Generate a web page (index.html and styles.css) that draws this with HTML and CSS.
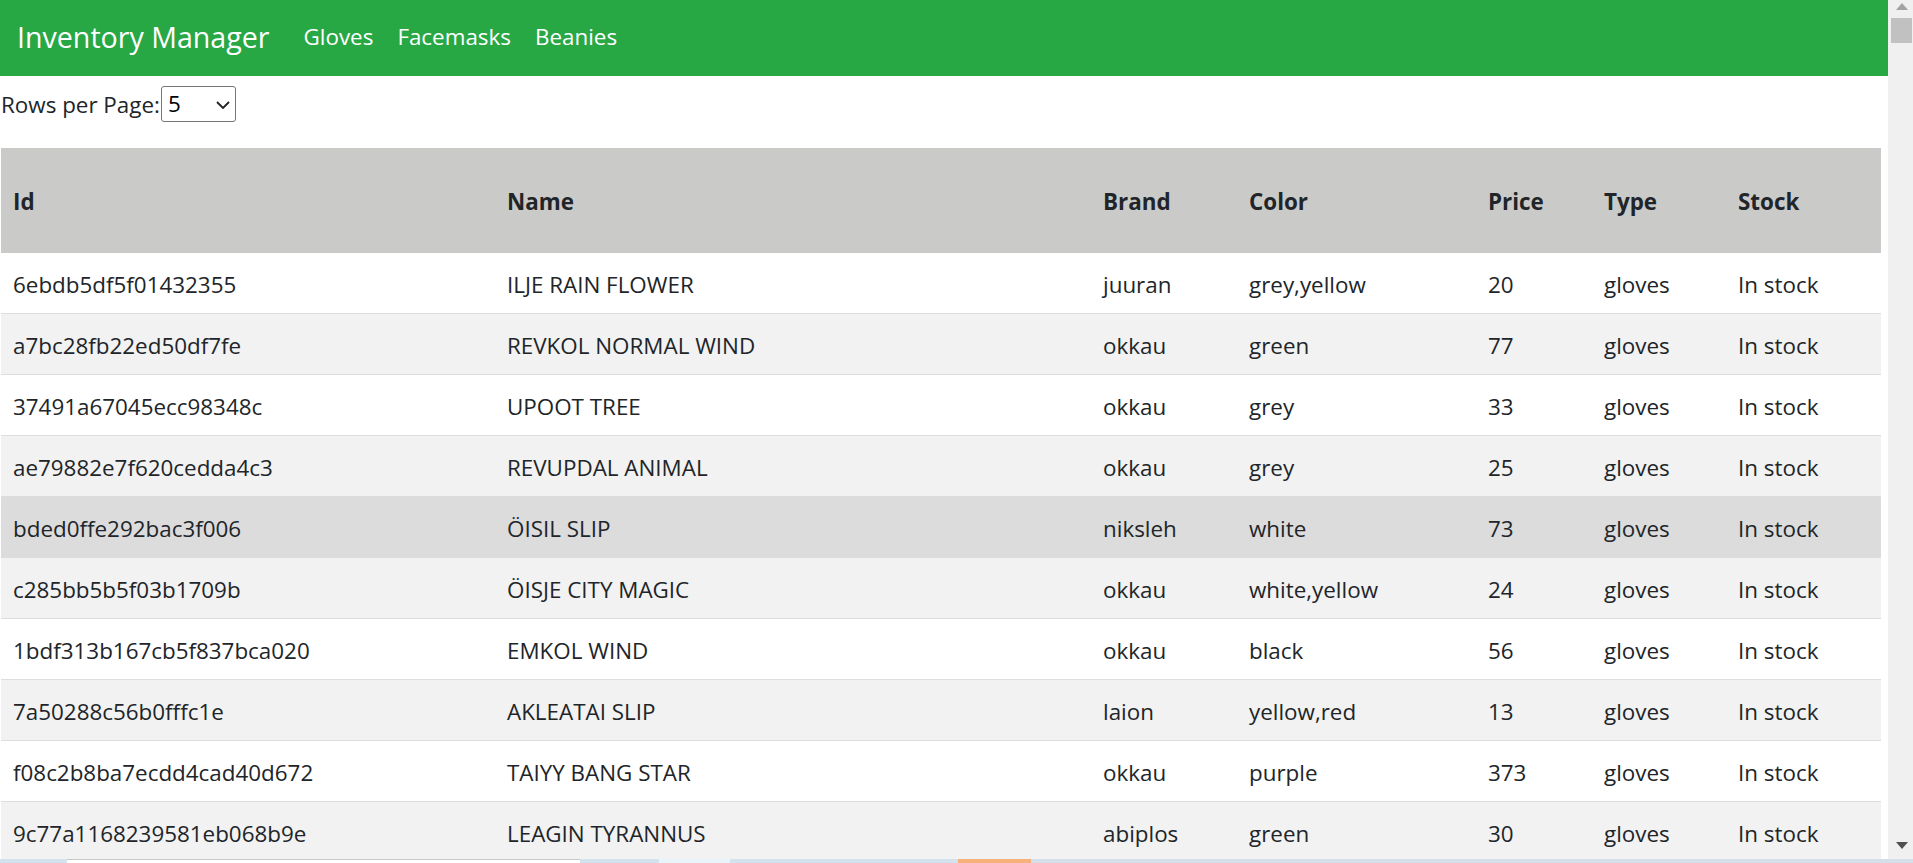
FILE: index.html
```html
<!DOCTYPE html>
<html lang="en">
<head>
<meta charset="utf-8">
<title>Inventory Manager</title>
<link rel="stylesheet" href="styles.css">
</head>
<body>
<div class="window">
  <div class="page">
    <nav class="navbar">
      <span class="brand">Inventory Manager</span>
      <a class="nav-link" href="#">Gloves</a>
      <a class="nav-link" href="#">Facemasks</a>
      <a class="nav-link" href="#">Beanies</a>
    </nav>
    <div class="controls">
      <label class="rows-label" for="rpp">Rows per Page:</label>
      <span class="select-wrap">
        <select id="rpp" class="select">
          <option>5</option>
          <option>10</option>
          <option>20</option>
        </select>
        <svg class="chevron" width="14" height="8" viewBox="0 0 14 8"><path d="M1 1l6 6 6-6" fill="none" stroke="#222" stroke-width="1.8"/></svg>
      </span>
    </div>
    <table class="inventory">
      <colgroup>
        <col class="c-id"><col class="c-name"><col class="c-brand"><col class="c-color"><col class="c-price"><col class="c-type"><col class="c-stock">
      </colgroup>
      <thead>
        <tr><th>Id</th><th>Name</th><th>Brand</th><th>Color</th><th>Price</th><th>Type</th><th>Stock</th></tr>
      </thead>
      <tbody>
        <tr><td>6ebdb5df5f01432355</td><td>ILJE RAIN FLOWER</td><td>juuran</td><td>grey,yellow</td><td>20</td><td>gloves</td><td>In stock</td></tr>
        <tr><td>a7bc28fb22ed50df7fe</td><td>REVKOL NORMAL WIND</td><td>okkau</td><td>green</td><td>77</td><td>gloves</td><td>In stock</td></tr>
        <tr><td>37491a67045ecc98348c</td><td>UPOOT TREE</td><td>okkau</td><td>grey</td><td>33</td><td>gloves</td><td>In stock</td></tr>
        <tr><td>ae79882e7f620cedda4c3</td><td>REVUPDAL ANIMAL</td><td>okkau</td><td>grey</td><td>25</td><td>gloves</td><td>In stock</td></tr>
        <tr class="hover"><td>bded0ffe292bac3f006</td><td>ÖISIL SLIP</td><td>niksleh</td><td>white</td><td>73</td><td>gloves</td><td>In stock</td></tr>
        <tr><td>c285bb5b5f03b1709b</td><td>ÖISJE CITY MAGIC</td><td>okkau</td><td>white,yellow</td><td>24</td><td>gloves</td><td>In stock</td></tr>
        <tr><td>1bdf313b167cb5f837bca020</td><td>EMKOL WIND</td><td>okkau</td><td>black</td><td>56</td><td>gloves</td><td>In stock</td></tr>
        <tr><td>7a50288c56b0fffc1e</td><td>AKLEATAI SLIP</td><td>laion</td><td>yellow,red</td><td>13</td><td>gloves</td><td>In stock</td></tr>
        <tr><td>f08c2b8ba7ecdd4cad40d672</td><td>TAIYY BANG STAR</td><td>okkau</td><td>purple</td><td>373</td><td>gloves</td><td>In stock</td></tr>
        <tr><td>9c77a1168239581eb068b9e</td><td>LEAGIN TYRANNUS</td><td>abiplos</td><td>green</td><td>30</td><td>gloves</td><td>In stock</td></tr>
      </tbody>
    </table>
  </div>
  <div class="scrollbar">
    <svg class="sb-arrow" width="12" height="7" viewBox="0 0 12 7"><path d="M6 0L12 7H0z" fill="#a3a3a3"/></svg>
    <div class="sb-thumb"></div>
    <div class="sb-track"></div>
    <svg class="sb-arrow down" width="12" height="7" viewBox="0 0 12 7"><path d="M0 0H12L6 7z" fill="#505050"/></svg>
  </div>
</div>
<div class="taskbar">
  <span class="tb-seg tb-a"></span>
  <span class="tb-seg tb-box"></span>
  <span class="tb-seg tb-b"></span>
  <span class="tb-seg tb-light"></span>
  <span class="tb-seg tb-c"></span>
  <span class="tb-seg tb-orange"></span>
  <span class="tb-seg tb-rest"></span>
</div>
</body>
</html>
```

FILE: styles.css
```css
* { box-sizing: border-box; }

html, body {
  margin: 0;
  padding: 0;
  height: 100%;
  overflow: hidden;
}

body {
  font-family: "Open Sans", "Noto Sans", sans-serif;
  font-size: 22.4px;
  color: #212529;
  background: #fff;
}

.window {
  display: flex;
  height: 863px;
}

.page {
  width: 1888px;
  flex: none;
  display: flex;
  flex-direction: column;
}

.navbar {
  height: 76px;
  background: #28a745;
  display: flex;
  align-items: center;
  padding: 0 0 3px 17px;
}

.brand {
  color: #fff;
  font-size: 28.6px;
  margin-right: 34px;
}

.nav-link {
  color: #fff;
  text-decoration: none;
  font-size: 22.4px;
  margin-right: 24px;
}

.controls {
  display: flex;
  align-items: center;
  padding: 10px 0 0 1px;
  height: 45px;
  margin-bottom: 27px;
}

.rows-label {
  font-size: 22.4px;
  padding-top: 2px;
  margin-right: 1px;
}

.select-wrap {
  position: relative;
  display: inline-block;
  width: 75px;
  height: 36px;
}

.select {
  appearance: none;
  -webkit-appearance: none;
  width: 75px;
  height: 36px;
  border: 1px solid #767676;
  border-radius: 3px;
  background: #fff;
  font-family: "Open Sans", "Noto Sans", sans-serif;
  font-size: 22.4px;
  color: #000;
  padding: 0 0 0 6px;
  margin: 0;
  line-height: 34px;
}

.chevron {
  position: absolute;
  left: 55px;
  top: 15px;
  pointer-events: none;
}

.inventory {
  border-collapse: collapse;
  table-layout: fixed;
  width: 1880px;
  margin-left: 1px;
}

.c-id { width: 494px; }
.c-name { width: 596px; }
.c-brand { width: 146px; }
.c-color { width: 239px; }
.c-price { width: 116px; }
.c-type { width: 134px; }
.c-stock { width: 155px; }

.inventory th {
  background: #cacbc8;
  text-align: left;
  font-weight: 700;
  padding: 39px 12px 36px;
  line-height: 30px;
  white-space: nowrap;
}

.inventory td {
  padding: 17px 12px 13px;
  line-height: 30px;
  white-space: nowrap;
  border-bottom: 1px solid #dddddd;
}

.inventory tbody tr:nth-child(even) {
  background: #f2f2f2;
}

.inventory tbody tr.hover {
  background: #dcdcdc;
}

.scrollbar {
  width: 25px;
  flex: none;
  background: #f0f0f0;
  display: flex;
  flex-direction: column;
  align-items: center;
  padding: 3px 0 14px 2px;
}

.sb-arrow { flex: none; }

.sb-thumb {
  flex: none;
  width: 21px;
  height: 25px;
  margin-top: 8px;
  background: #c1c1c1;
}

.sb-track { flex: 1; }

.taskbar {
  position: fixed;
  left: 0;
  right: 0;
  bottom: 0;
  height: 4px;
  display: flex;
}

.tb-seg { display: block; height: 4px; }
.tb-a { width: 67px; background: #d3e3ed; }
.tb-box { width: 513px; background: #fff; border-top: 1px solid #c8c8c8; }
.tb-b { width: 79px; background: #d3e3ed; }
.tb-light { width: 71px; background: #e8f4f8; }
.tb-c { width: 228px; background: #d3e3ed; }
.tb-orange { width: 73px; background: #f7b27b; }
.tb-rest { flex: 1; background: #d5dfe9; }
```
